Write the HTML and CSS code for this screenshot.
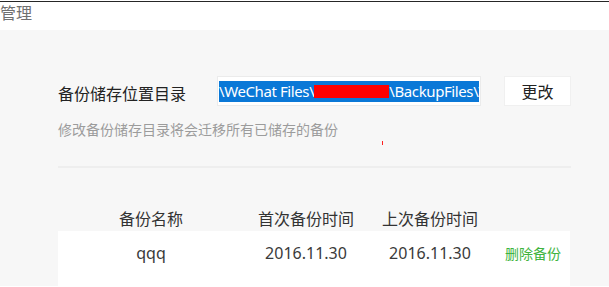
FILE: index.html
```html
<!DOCTYPE html>
<html lang="zh-CN">
<head>
<meta charset="utf-8">
<title>管理</title>
<link rel="stylesheet" href="styles.css">
</head>
<body>
<header class="topbar">管理</header>
<main class="panel">
  <div class="setting">
    <span class="label">备份储存位置目录</span>
    <div class="path-box">
      <span class="path-sel">\WeChat Files\<span class="redact"></span>\BackupFiles\\</span>
    </div>
    <button class="change-btn">更改</button>
  </div>
  <p class="hint">修改备份储存目录将会迁移所有已储存的备份</p>
  <span class="red-tick"></span>
  <hr class="divider">
  <div class="table">
    <div class="thead">
      <span>备份名称</span>
      <span>首次备份时间</span>
      <span>上次备份时间</span>
      <span></span>
    </div>
    <div class="trow">
      <span>qqq</span>
      <span>2016.11.30</span>
      <span>2016.11.30</span>
      <span class="del">删除备份</span>
    </div>
  </div>
</main>
</body>
</html>
```

FILE: styles.css
```css
html, body {
  margin: 0;
  padding: 0;
  background: #ffffff;
  overflow: hidden;
}
body {
  width: 609px;
  height: 287px;
  font-family: "Noto Sans", "Noto Sans CJK SC", sans-serif;
}
.topbar {
  margin-top: 1px;
  border-top: 1px solid #262626;
  height: 29px;
  box-sizing: border-box;
  padding-top: 1px;
  font-family: "Noto Sans CJK SC", sans-serif;
  font-size: 16px;
  line-height: 18px;
  color: #707070;
  background: #ffffff;
}
.panel {
  position: relative;
  background: #f7f7f7;
  height: 256px;
  padding: 46px 38px 0 58px;
  box-sizing: border-box;
}
.setting {
  display: flex;
  align-items: center;
  height: 30px;
}
.label {
  width: 159px;
  font-family: "Noto Sans CJK SC", sans-serif;
  font-size: 16px;
  color: #222222;
  padding-top: 4px;
}
.path-box {
  width: 264px;
  height: 30px;
  box-sizing: border-box;
  background: #ffffff;
  border: 1px solid #ebebeb;
  padding: 4px 1px 2px 1px;
  overflow: hidden;
  white-space: nowrap;
}
.path-sel {
  display: block;
  height: 21px;
  background: #0a78d7;
  color: #ffffff;
  font-size: 15px;
  line-height: 21px;
  letter-spacing: -0.4px;
  overflow: hidden;
}
.redact {
  display: inline-block;
  width: 75px;
  height: 13px;
  background: #ff0000;
  vertical-align: -1px;
}
.change-btn {
  margin-left: 23px;
  width: 67px;
  height: 30px;
  background: #ffffff;
  border: 1px solid #f0f0f0;
  font-family: "Noto Sans CJK SC", sans-serif;
  font-size: 16px;
  color: #222222;
  padding: 0;
}
.hint {
  margin: 14px 0 0 0;
  font-family: "Noto Sans CJK SC", sans-serif;
  font-size: 14px;
  line-height: 18px;
  color: #9c9c9c;
}
.red-tick {
  position: absolute;
  left: 382px;
  top: 111px;
  width: 1px;
  height: 4px;
  background: #ff2020;
}
.divider {
  margin: 28px 0 0 0;
  border: 0;
  height: 2px;
  background: #eeeeee;
}
.table {
  margin-top: 40px;
  width: 512px;
}
.thead, .trow {
  display: grid;
  grid-template-columns: 186px 124px 124px 78px;
  text-align: center;
}
.thead {
  font-family: "Noto Sans CJK SC", sans-serif;
  font-size: 16px;
  line-height: 20px;
  color: #333333;
  height: 23px;
}
.trow {
  background: #ffffff;
  height: 60px;
  padding-top: 12px;
  box-sizing: border-box;
  font-size: 16px;
  line-height: 20px;
  color: #3a3a3a;
}
.trow .del {
  font-family: "Noto Sans CJK SC", sans-serif;
  font-size: 14px;
  color: #40b440;
  padding-left: 4px;
}
```
